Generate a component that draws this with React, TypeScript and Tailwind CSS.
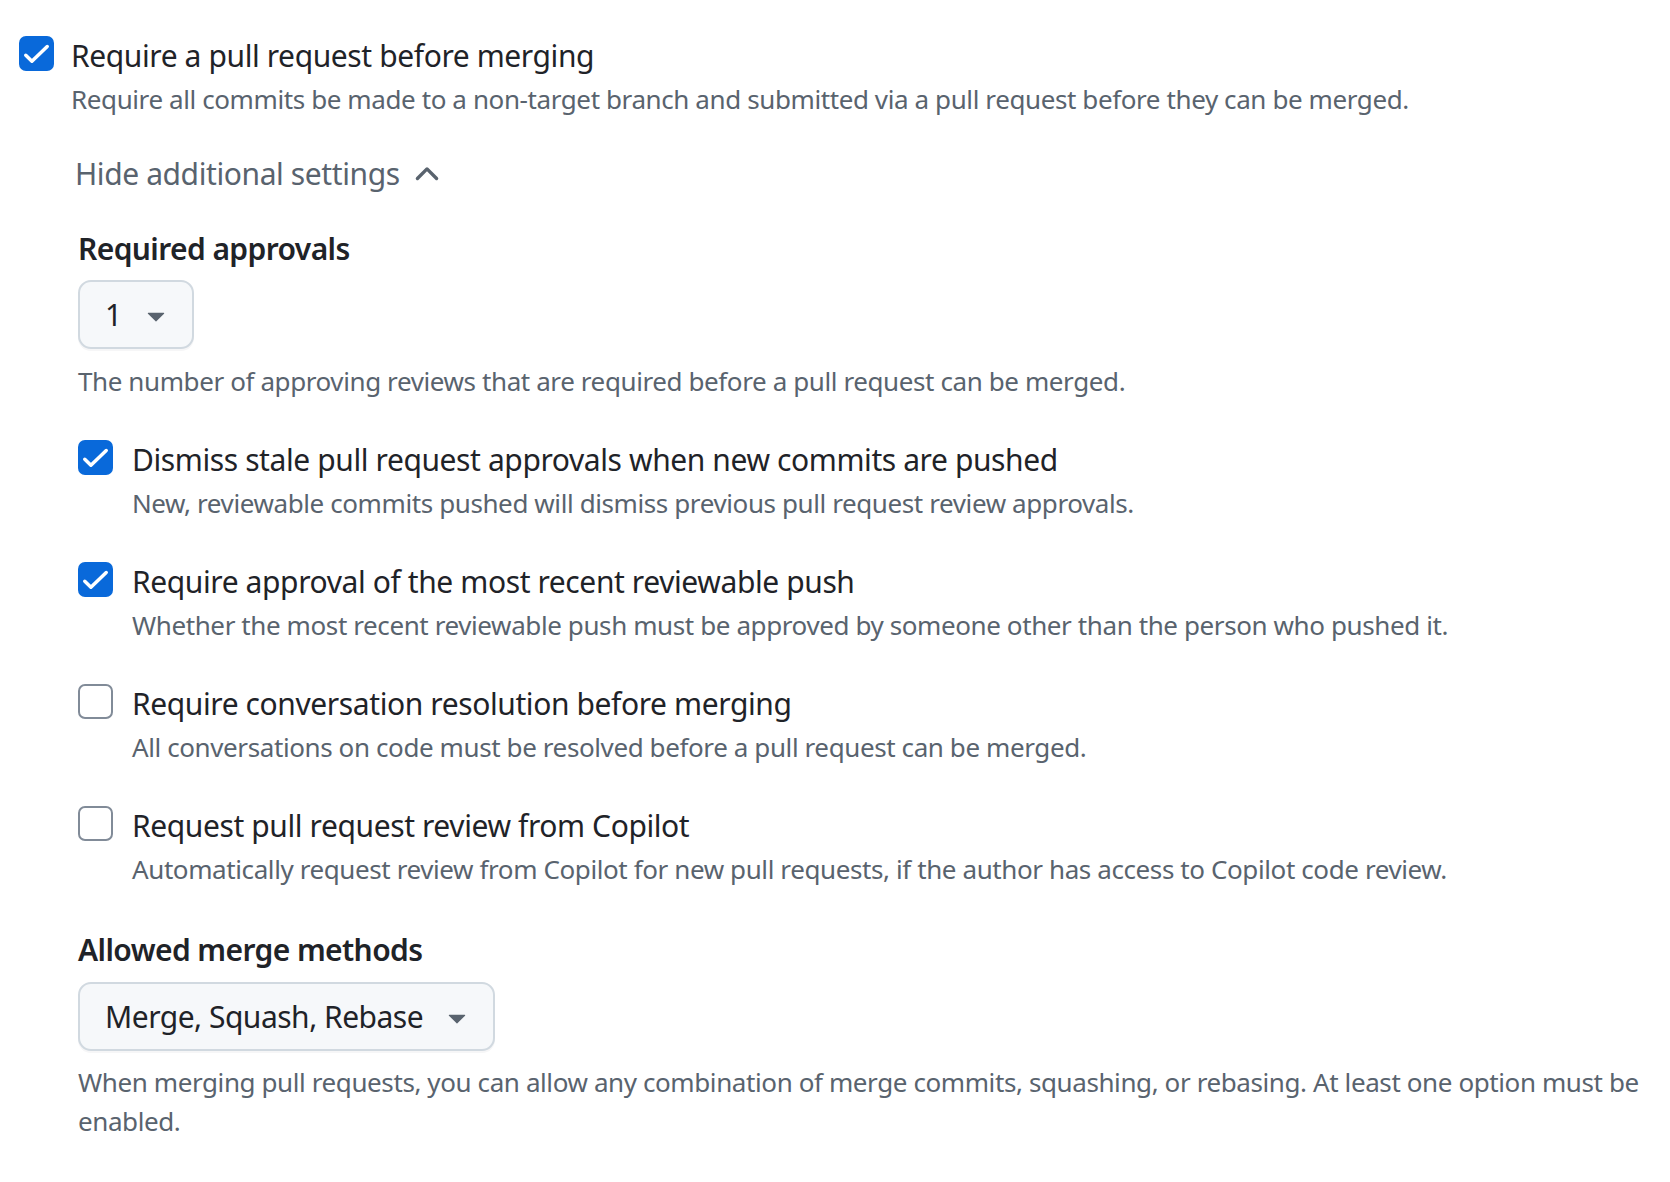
import { useState } from "react";

type Option = {
  id: string;
  title: string;
  description: string;
  checked: boolean;
};

const initialOptions: Option[] = [
  {
    id: "dismiss",
    title: "Dismiss stale pull request approvals when new commits are pushed",
    description: "New, reviewable commits pushed will dismiss previous pull request review approvals.",
    checked: true,
  },
  {
    id: "recent",
    title: "Require approval of the most recent reviewable push",
    description:
      "Whether the most recent reviewable push must be approved by someone other than the person who pushed it.",
    checked: true,
  },
  {
    id: "conversation",
    title: "Require conversation resolution before merging",
    description: "All conversations on code must be resolved before a pull request can be merged.",
    checked: false,
  },
  {
    id: "copilot",
    title: "Request pull request review from Copilot",
    description:
      "Automatically request review from Copilot for new pull requests, if the author has access to Copilot code review.",
    checked: false,
  },
];

const Checkbox = ({ checked, onChange }: { checked: boolean; onChange: () => void }) => (
  <button
    type="button"
    onClick={onChange}
    className={`mt-[2px] flex h-[35px] w-[35px] shrink-0 items-center justify-center rounded-[7px] ${
      checked ? "bg-[#0969da]" : "border-2 border-[#818b98] bg-white"
    }`}
  >
    {checked && (
      <svg width="35" height="35" viewBox="0 0 16 16" fill="none">
        <path
          d="M3.1 8.8 5.9 11.5 12.9 4.8"
          stroke="white"
          strokeWidth="1.6"
          strokeLinecap="round"
          strokeLinejoin="round"
        />
      </svg>
    )}
  </button>
);

const TriangleDown = () => (
  <svg width="36" height="36" viewBox="0 0 16 16" fill="#59636e">
    <path d="m4.427 7.427 3.396 3.396a.25.25 0 0 0 .354 0l3.396-3.396A.25.25 0 0 0 11.396 7H4.604a.25.25 0 0 0-.177.427Z" />
  </svg>
);

const ChevronUp = () => (
  <svg width="36" height="36" viewBox="0 0 16 16" fill="#59636e">
    <path d="M3.22 10.53a.749.749 0 0 1 0-1.06l4.25-4.25a.749.749 0 0 1 1.06 0l4.25 4.25a.749.749 0 0 1-1.06 1.06L8 6.811 4.28 10.53a.749.749 0 0 1-1.06 0Z" />
  </svg>
);

const Select = ({ value }: { value: string }) => (
  <button
    type="button"
    className="flex h-[69px] items-center gap-[16px] rounded-[13px] border-2 border-[#d1d9e0] bg-[#f6f8fa] pl-[25px] pr-[18px] text-[30px] tracking-[-0.5px] text-[#1f2328] shadow-[0_2px_0_rgba(31,35,40,0.04)]"
  >
    <span>{value}</span>
    <TriangleDown />
  </button>
);

const App = () => {
  const [requirePr, setRequirePr] = useState(true);
  const [options, setOptions] = useState(initialOptions);

  const toggle = (id: string) =>
    setOptions((prev) => prev.map((o) => (o.id === id ? { ...o, checked: !o.checked } : o)));

  return (
    <div className="min-h-screen bg-white pl-[19px] pr-[20px] pt-[34px] font-['Noto_Sans',sans-serif] text-[#1f2328]">
      {/* Top level rule */}
      <div className="flex gap-[17px]">
        <Checkbox checked={requirePr} onChange={() => setRequirePr(!requirePr)} />
        <div>
          <p className="text-[30px] leading-[44px] tracking-[-0.4px]">Require a pull request before merging</p>
          <p className="mt-[1px] text-[26px] leading-[40px] tracking-[-0.4px] text-[#59636e]">
            Require all commits be made to a non-target branch and submitted via a pull request before they can be merged.
          </p>
        </div>
      </div>

      <div className="ml-[59px]">
        <button
          type="button"
          className="mt-[32px] flex items-center gap-[9px] text-[30px] leading-[45px] tracking-[-0.4px] text-[#59636e]"
        >
          <span className="-ml-[3px]">Hide additional settings</span>
          <ChevronUp />
        </button>

        {/* Required approvals */}
        <h3 className="mt-[30px] text-[30px] font-semibold leading-[45px] tracking-[-0.6px]">Required approvals</h3>
        <div className="mt-[9px] flex">
          <Select value="1" />
        </div>
        <p className="mt-[12px] text-[26px] leading-[40px] tracking-[-0.4px] text-[#59636e]">
          The number of approving reviews that are required before a pull request can be merged.
        </p>

        {/* Options */}
        <div className="mt-[37px] flex flex-col gap-[37px]">
          {options.map((o) => (
            <div key={o.id} className="flex gap-[19px]">
              <Checkbox checked={o.checked} onChange={() => toggle(o.id)} />
              <div>
                <p className="text-[30px] leading-[44px] tracking-[-0.4px]">{o.title}</p>
                <p className="mt-[1px] text-[26px] leading-[40px] tracking-[-0.4px] text-[#59636e]">{o.description}</p>
              </div>
            </div>
          ))}
        </div>

        {/* Merge methods */}
        <h3 className="mt-[38px] text-[30px] font-semibold leading-[45px] tracking-[-0.6px]">Allowed merge methods</h3>
        <div className="mt-[10px] flex">
          <Select value="Merge, Squash, Rebase" />
        </div>
        <p className="mt-[12px] text-[26px] leading-[39px] tracking-[-0.4px] text-[#59636e]">
          When merging pull requests, you can allow any combination of merge commits, squashing, or rebasing. At least one option must be enabled.
        </p>
      </div>
    </div>
  );
};

export default App;
